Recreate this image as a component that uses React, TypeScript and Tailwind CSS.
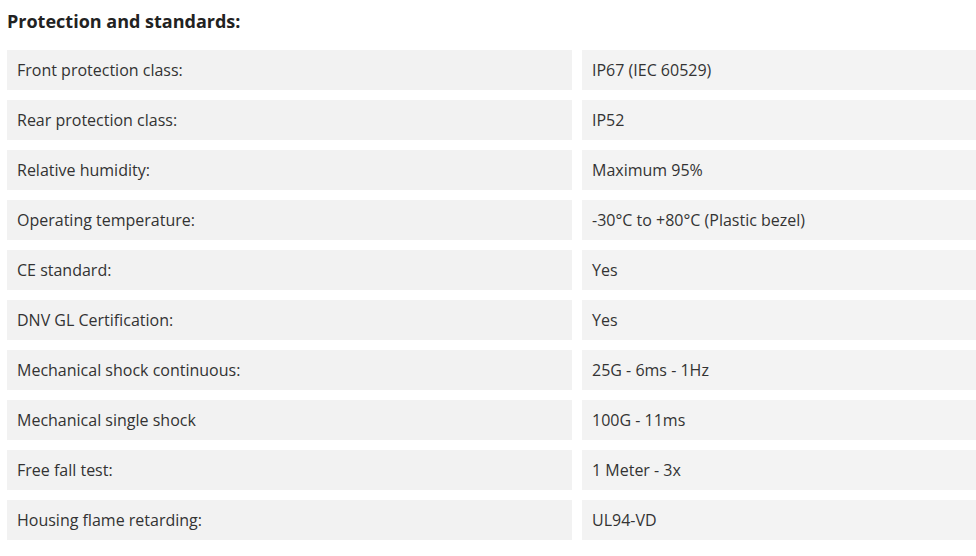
const rows: [string, string][] = [
  ["Front protection class:", "IP67 (IEC 60529)"],
  ["Rear protection class:", "IP52"],
  ["Relative humidity:", "Maximum 95%"],
  ["Operating temperature:", "-30°C to +80°C (Plastic bezel)"],
  ["CE standard:", "Yes"],
  ["DNV GL Certification:", "Yes"],
  ["Mechanical shock continuous:", "25G - 6ms - 1Hz"],
  ["Mechanical single shock", "100G - 11ms"],
  ["Free fall test:", "1 Meter - 3x"],
  ["Housing flame retarding:", "UL94-VD"],
];

export default function App() {
  return (
    <div
      className="w-[976px] h-[556px] bg-white overflow-hidden pl-[7px]"
      style={{ fontFamily: '"Open Sans", "Noto Sans", sans-serif' }}
    >
      <h2 className="pt-[9px] mb-[17px] text-[18px] leading-[24px] font-bold text-[#222]">
        Protection and standards:
      </h2>
      <div className="flex flex-col gap-[10px]">
        {rows.map(([label, value]) => (
          <div key={label} className="flex gap-[10px] h-[40px]">
            <div className="w-[565px] bg-[#f2f2f2] flex items-center px-[10px] text-[16px] text-[#333]">
              {label}
            </div>
            <div className="flex-1 bg-[#f3f3f3] flex items-center px-[10px] text-[16px] text-[#333]">
              {value}
            </div>
          </div>
        ))}
      </div>
    </div>
  );
}
